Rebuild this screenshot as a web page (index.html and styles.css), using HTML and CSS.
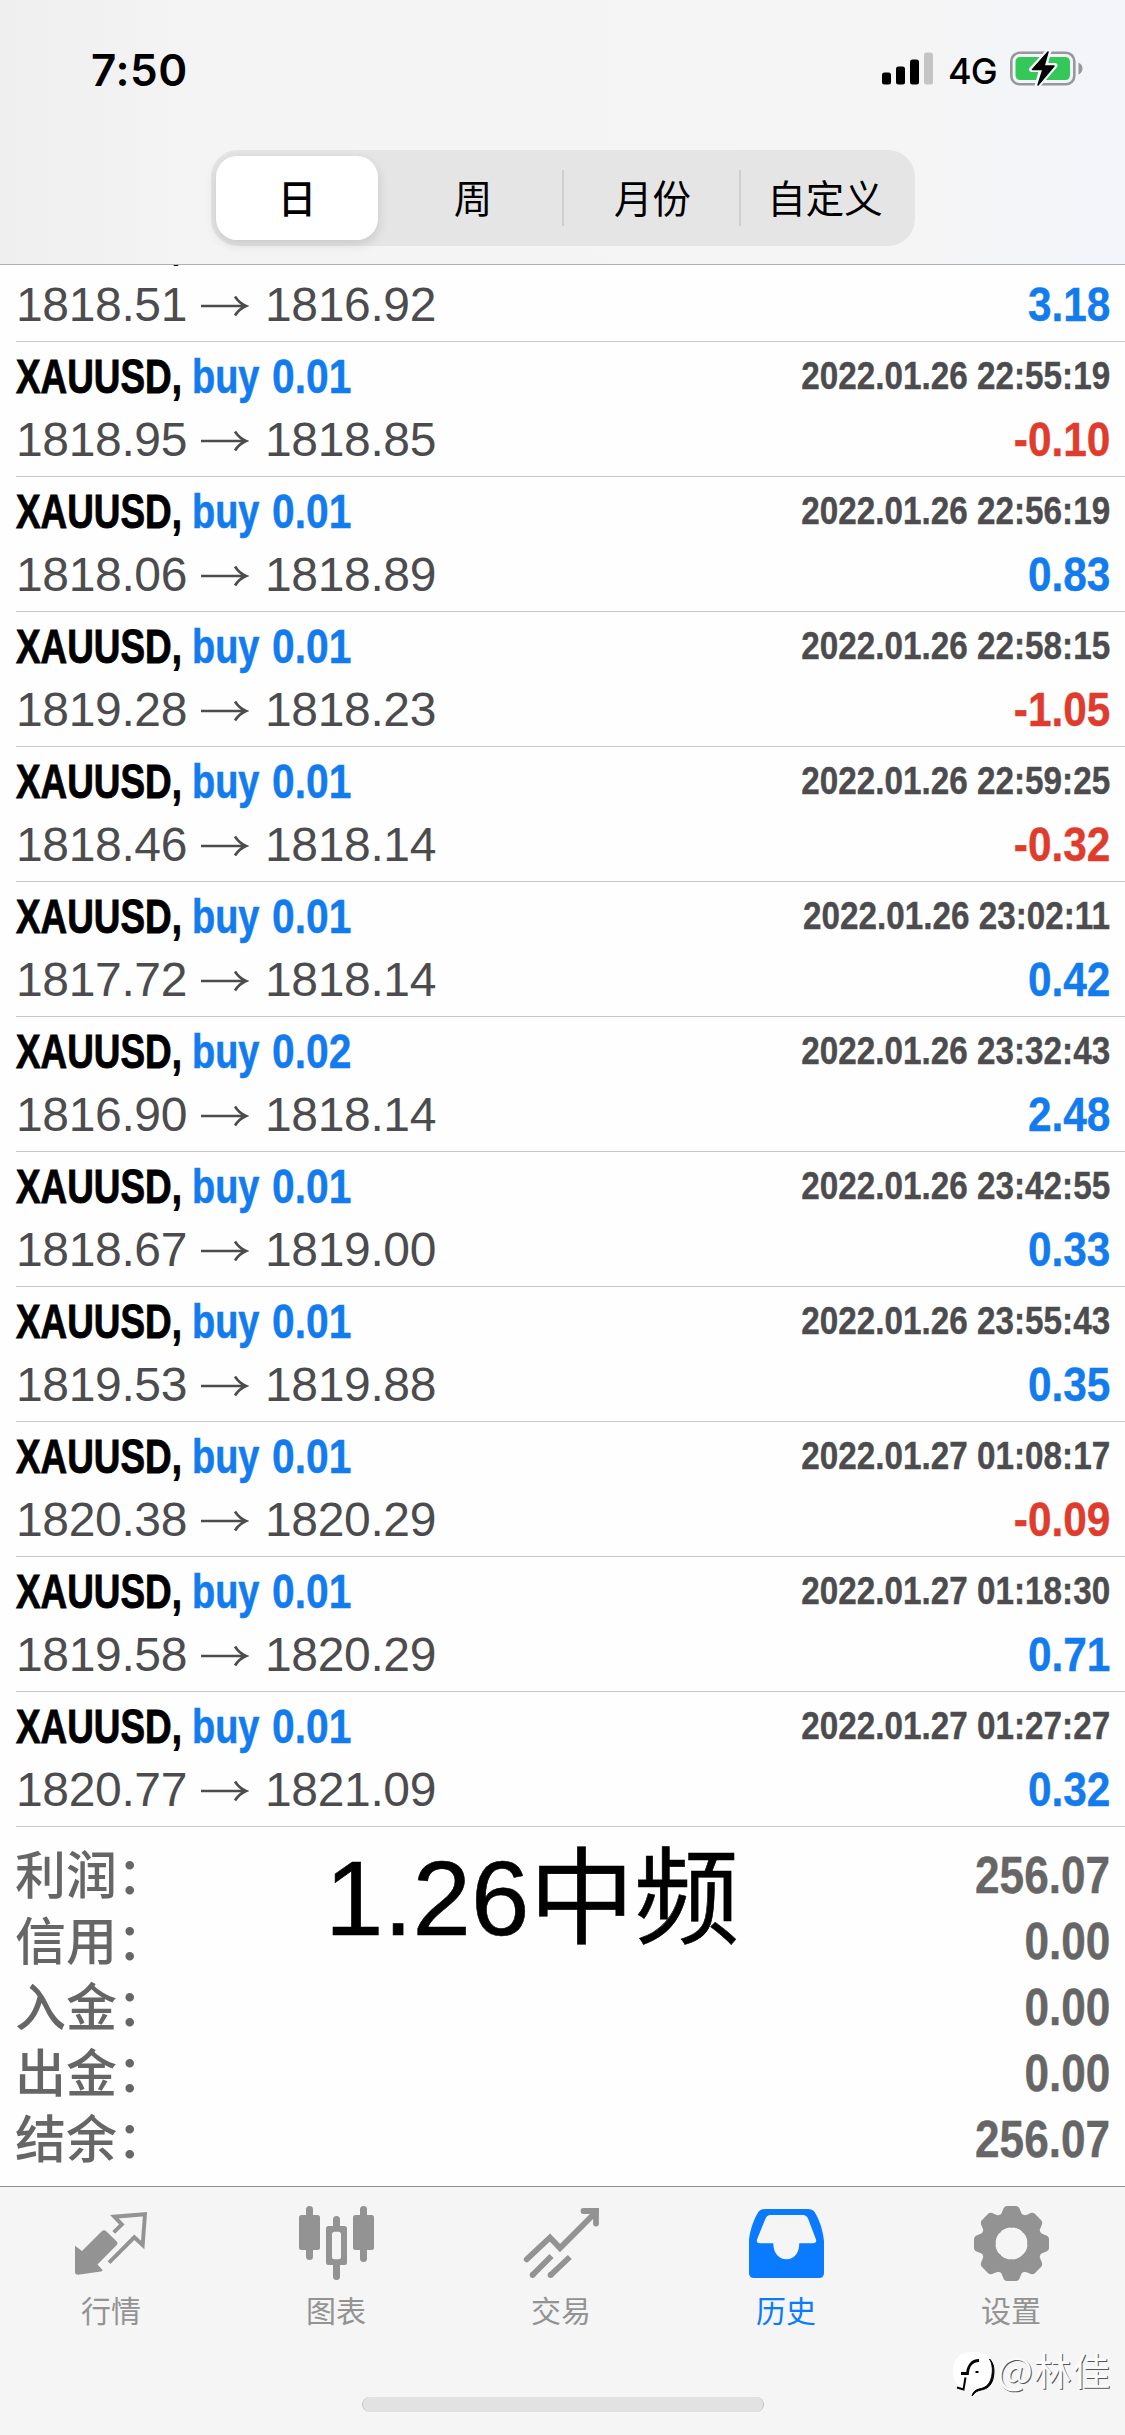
FILE: index.html
```html
<!DOCTYPE html>
<html lang="zh-CN">
<head>
<meta charset="utf-8">
<title>历史</title>
<link rel="stylesheet" href="styles.css">
</head>
<body>
<div class="screen">
  <header class="header">
    <div class="status">
      <span class="clock">7:50</span>
      <div class="status-right">
        <svg class="signal" width="52" height="33" viewBox="0 0 52 33"><rect x="0" y="20.500" width="9" height="12" rx="2.500"/><rect x="14" y="14.500" width="9" height="18" rx="2.500"/><rect x="28" y="7.500" width="9" height="25" rx="2.500"/><rect x="42" y="0.500" width="9" height="32" rx="2.500" fill="#c4c4c5"/></svg>
        <span class="network">4G</span>
        <svg class="battery" width="76" height="38" viewBox="0 0 76 38"><rect x="2.300" y="3.800" width="63" height="31.500" rx="8.500" fill="none" stroke="#98989b" stroke-width="2.600"/><path d="M69.500 13.500q4 2 4 6t-4 6z" fill="#98989b"/><rect x="6.500" y="8" width="54.500" height="23" rx="4.500" fill="#34c759"/><path d="M40 1.500 22.500 20.500h10L28 37.500 46 16.500H36z" fill="#f5f6f9" stroke="#f5f6f9" stroke-width="5" stroke-linejoin="round"/><path d="M39 3 23.500 20.500h10.500L29 36 45 17H35z" fill="#000" stroke="#000" stroke-width="1.500" stroke-linejoin="round"/></svg>
      </div>
    </div>
    <nav class="segments">
      <span class="segment selected">日</span><span class="segment">周</span><span class="segment month">月份</span><span class="segment">自定义</span>
    </nav>
  </header>
  <main class="content">
    <ul class="deals" id="deals"></ul>
    <dl class="totals">
      <div class="total"><dt>利润：</dt><dd>256.07</dd></div>
      <div class="total"><dt>信用：</dt><dd>0.00</dd></div>
      <div class="total"><dt>入金：</dt><dd>0.00</dd></div>
      <div class="total"><dt>出金：</dt><dd>0.00</dd></div>
      <div class="total"><dt>结余：</dt><dd>256.07</dd></div>
    </dl>
    <div class="caption">1.26中频</div>
  </main>
  <footer class="tabbar">
    <a class="tab"><svg class="icon" viewBox="0 0 225 84"><path d="M113.700 32.300 121.800 24.500 114.300 16.700 145 14.200 142.700 45 134.300 37.300 109 62.700" fill="none" stroke="currentColor" stroke-width="3.900"/><path d="M75 45.700 82 51 101.500 31.500Q104 29 106.500 31.500L116.500 41.200Q118.500 43.300 116.500 45.300L97.500 64.500 102.500 70Q102.800 71.300 101 71.500L78 74.800Q75 74.800 75 72Z" fill="currentColor"/></svg><span>行情</span></a>
    <a class="tab"><svg class="icon" viewBox="0 0 225 84" fill="currentColor"><rect x="74" y="15" width="21" height="35" rx="2.500"/><rect x="81" y="6" width="7" height="54" rx="3.500"/><path fill-rule="evenodd" d="M103.500 26h16q2.500 0 2.500 2.500v34q0 2.500-2.500 2.500h-16q-2.500 0-2.500-2.500v-34q0-2.500 2.500-2.500zm6 5.700q-2.500 0-2.500 2.500v22.500q0 2.500 2.500 2.500h4q2.500 0 2.500-2.500V34.200q0-2.500-2.500-2.500z"/><path d="M108 27v-7.500a3.500 3.500 0 0 1 7 0V27zM108 64v12.500a3.500 3.500 0 0 0 7 0V64z"/><rect x="128" y="15" width="21" height="35" rx="2.500"/><rect x="135" y="6" width="7" height="56" rx="3.500"/></svg><span>图表</span></a>
    <a class="tab"><svg class="icon" viewBox="0 0 225 84" fill="none" stroke="currentColor" stroke-width="5.800"><path d="M76.700 59.300 100 37.500 110 48 145 13" stroke-linecap="round"/><path d="M133.500 11h12.500v12.500" stroke-linecap="round"/><path d="M143 8h5.900v6z" fill="currentColor" stroke="none"/><path d="M82.300 75.300 101.500 56M100.300 75.300 119.800 57"/><circle cx="82.600" cy="75" r="2.900" fill="currentColor" stroke="none"/><circle cx="100.600" cy="75" r="2.900" fill="currentColor" stroke="none"/></svg><span>交易</span></a>
    <a class="tab active"><svg class="icon" viewBox="0 0 225 84" fill="currentColor"><path fill-rule="evenodd" d="M74 41C75 27 82 13 84.500 10.800Q86.500 9 90 9H133Q136.500 9 138.500 10.800C141 13 148 27 149 41V73Q149 78 144 78H79Q74 78 74 73ZM95.500 15Q92 15 90.500 18.500L82 39.500Q81 43.200 85 43.200H98.300C98.300 53 104 59.300 111.500 59.300S124.300 53 124.300 43.200H138Q142 43.200 141 39.500L133 18.500Q131.500 15 128 15Z"/></svg><span>历史</span></a>
    <a class="tab"><svg class="icon" viewBox="0 0 225 84" fill="currentColor"><defs><path id="tooth" d="M-12.500-27Q-10-29-8.800-33Q-7.500-37.500-4.500-37.500H4.500Q7.500-37.500 8.800-33Q10-29 12.500-27L0-15Z"/></defs><g transform="translate(111.500 43.500)"><circle r="23.500" fill="none" stroke="currentColor" stroke-width="15"/><use href="#tooth"/><use href="#tooth" transform="rotate(45)"/><use href="#tooth" transform="rotate(90)"/><use href="#tooth" transform="rotate(135)"/><use href="#tooth" transform="rotate(180)"/><use href="#tooth" transform="rotate(225)"/><use href="#tooth" transform="rotate(270)"/><use href="#tooth" transform="rotate(315)"/><circle r="15.700" fill="#f5f5f5"/></g></svg><span>设置</span></a>
    <div class="home-indicator"></div>
    <div class="watermark"><svg width="44" height="50" viewBox="0 0 44 50"><path d="M22 1c13 0 19 6 19 18 0 11-4 17-12 19-4 1-7 3-9 6l-1-5C7 38 2 33 2 20 2 7 9 1 22 1z" fill="#fff"/><path d="M38.500 8c3.500 5 3.500 14 1.500 20-2 6-6 9-12 10-4 1-6 3-7 7l1-1c2-3 4-4 8-5 6-1 10-4 12-11 2-8 1-16-3.500-20z" stroke="#000"/><path d="M10 22.500h6.500C17 15 21 9.500 28 9.500" fill="none" stroke="#000" stroke-width="2.800"/><path d="M14.500 26.500 12.500 38.500 6 36.500" fill="none" stroke="#000" stroke-width="2"/><path d="M24.500 20h3v2h-3z"/></svg><span>@林佳</span></div>
  </footer>
</div>
<script src="deals.js"></script>
</body>
</html>
```
FILE: styles.css
```css
* { box-sizing: border-box; }
body { margin: 0; background: #fefefe; font-family: "Liberation Sans", "Noto Sans CJK SC", sans-serif; }
.screen { width: 1125px; height: 2435px; display: flex; flex-direction: column; overflow: hidden; }

.header { height: 265px; flex: none; border-bottom: 1px solid #b0b0b0; background: linear-gradient(90deg, #efefef 0, #f5f4f4 210px, #f5f5f5 900px, #f3f5fb 100%); }
.status { height: 150px; display: flex; justify-content: space-between; align-items: flex-start; padding: 42px 40px 0 91px; }
.clock { font: 600 44px/56px Inter, sans-serif; letter-spacing: .6px; }
.status-right { display: flex; align-items: flex-start; padding-top: 10px; }
.network { font: 500 36px/38px Inter, sans-serif; margin-left: 14px; width: 60px; white-space: nowrap; letter-spacing: -1px; }
.battery { margin-top: -3px; margin-left: 1px; }
.segments { width: 704px; height: 96px; margin-left: 211px; padding: 6px 5px; display: grid; grid-template-columns: 162px 190px 177px 160px; background: #e6e5e6; border-radius: 27px; }
.segment { position: relative; text-align: center; font: 400 38.500px/81px "Noto Sans CJK SC", sans-serif; }
.segment.selected { background: #fff; border-radius: 21px; font-weight: 500; box-shadow: 0 4px 12px rgba(0,0,0,.13); }
.segment.month { padding-right: 8px; }
.segment:nth-child(n+3)::before { content: ""; position: absolute; left: -6px; top: 14px; width: 2px; height: 56px; background: #cfcfd1; }

.content { position: relative; flex: 1; }
.deals { list-style: none; margin: 0; padding: 0 0 0 16px; height: 1562px; overflow: hidden; }
.deal { height: 135px; border-bottom: 1px solid #c8c8c9; padding-right: 15px; }
.deal:first-child { margin-top: -58px; }
.line { display: flex; height: 69px; line-height: 69px; font-size: 48px; white-space: nowrap; }
.line.prices { height: 58px; line-height: 58px; color: #4c4c4e; align-items: center; }
.narrow { display: block; font-weight: 700; transform-origin: left; }
.symbol { width: 176px; transform: scaleX(.768); -webkit-text-stroke: .9px; }
.side { width: 80px; color: #127bee; transform: scaleX(.79); -webkit-text-stroke: .6px; }
.volume { color: #127bee; transform: scaleX(.85); -webkit-text-stroke: .4px; }
.time { margin-left: auto; font-size: 39px; line-height: 68px; color: #4c4c4e; transform: scaleX(.853); transform-origin: right; -webkit-text-stroke: .4px; }
.profit { margin-left: auto; color: #127bee; transform: scaleX(.883); transform-origin: right; -webkit-text-stroke: .4px; }
.profit.loss { color: #e03c2e; }
.price { width: 171px; letter-spacing: -.35px; }
.arrow { margin: 2px 16px 0 14px; flex: none; }

.totals { margin: 0; padding: 16px 15px 0 16px; color: #666; }
.total { height: 66px; display: flex; justify-content: space-between; }
.total dt { font: 500 51px/58px "Noto Sans CJK SC", sans-serif; margin-left: -1px; }
.total dd { margin: 0; font-weight: 700; font-size: 51px; line-height: 66px; transform: scaleX(.865); transform-origin: right; -webkit-text-stroke: .4px; }
.caption { position: absolute; left: 325px; top: 1574px; font-size: 105px; line-height: 120px; white-space: nowrap; color: #000; -webkit-text-stroke: .6px; }

.tabbar { position: relative; flex: none; height: 249px; border-top: 1px solid #8f8f8f; background: #f5f5f5; display: grid; grid-template-columns: repeat(5, 225px); align-items: start; padding-top: 13px; }
.tab { display: flex; flex-direction: column; color: #939393; text-align: center; font: 400 30px/44px "Noto Sans CJK SC", sans-serif; }
.tab span { margin: 3px 3px 0 0; }
.tab.active { color: #0a7aff; }
.icon { width: 225px; height: 84px; }
.home-indicator { position: absolute; left: 362px; top: 210px; width: 402px; height: 15px; border-radius: 8px; background: #e2e2e2; border: solid #c4c4c4; border-width: 0 1px; }
.watermark { position: absolute; left: 951px; top: 164px; display: flex; align-items: flex-start; color: #fafafa; font: 400 38px/46px "Noto Sans CJK SC", sans-serif; text-shadow: 1px 1px 0 #555; }
.watermark span { margin: -5px 0 0 2px; letter-spacing: .6px; }
```
FILE: deals.js
```js
// The topmost deal is scrolled under the header, so only its symbol is filled in.
const deals = [
  ["", "", "1818.51", "1816.92", "3.18"],
  ["0.01", "2022.01.26 22:55:19", "1818.95", "1818.85", "-0.10"],
  ["0.01", "2022.01.26 22:56:19", "1818.06", "1818.89", "0.83"],
  ["0.01", "2022.01.26 22:58:15", "1819.28", "1818.23", "-1.05"],
  ["0.01", "2022.01.26 22:59:25", "1818.46", "1818.14", "-0.32"],
  ["0.01", "2022.01.26 23:02:11", "1817.72", "1818.14", "0.42"],
  ["0.02", "2022.01.26 23:32:43", "1816.90", "1818.14", "2.48"],
  ["0.01", "2022.01.26 23:42:55", "1818.67", "1819.00", "0.33"],
  ["0.01", "2022.01.26 23:55:43", "1819.53", "1819.88", "0.35"],
  ["0.01", "2022.01.27 01:08:17", "1820.38", "1820.29", "-0.09"],
  ["0.01", "2022.01.27 01:18:30", "1819.58", "1820.29", "0.71"],
  ["0.01", "2022.01.27 01:27:27", "1820.77", "1821.09", "0.32"],
];
document.getElementById("deals").innerHTML = deals.map(([volume, time, open, close, profit]) => `
  <li class="deal">
    <div class="line"><span class="narrow symbol">XAUUSD,</span>${volume ? `<span class="narrow side">buy</span><span class="narrow volume">${volume}</span><span class="narrow time">${time}</span>` : ""}</div>
    <div class="line prices"><span class="price">${open}</span><svg class="arrow" width="48" height="24" viewBox="0 0 48 24"><path d="M0 12h44M34 2.500Q38 9 45 12Q38 15 34 21.500" fill="none" stroke="currentColor" stroke-width="2.600"/></svg><span class="price">${close}</span><span class="narrow profit${profit[0] === "-" ? " loss" : ""}">${profit}</span></div>
  </li>`).join("");
```
